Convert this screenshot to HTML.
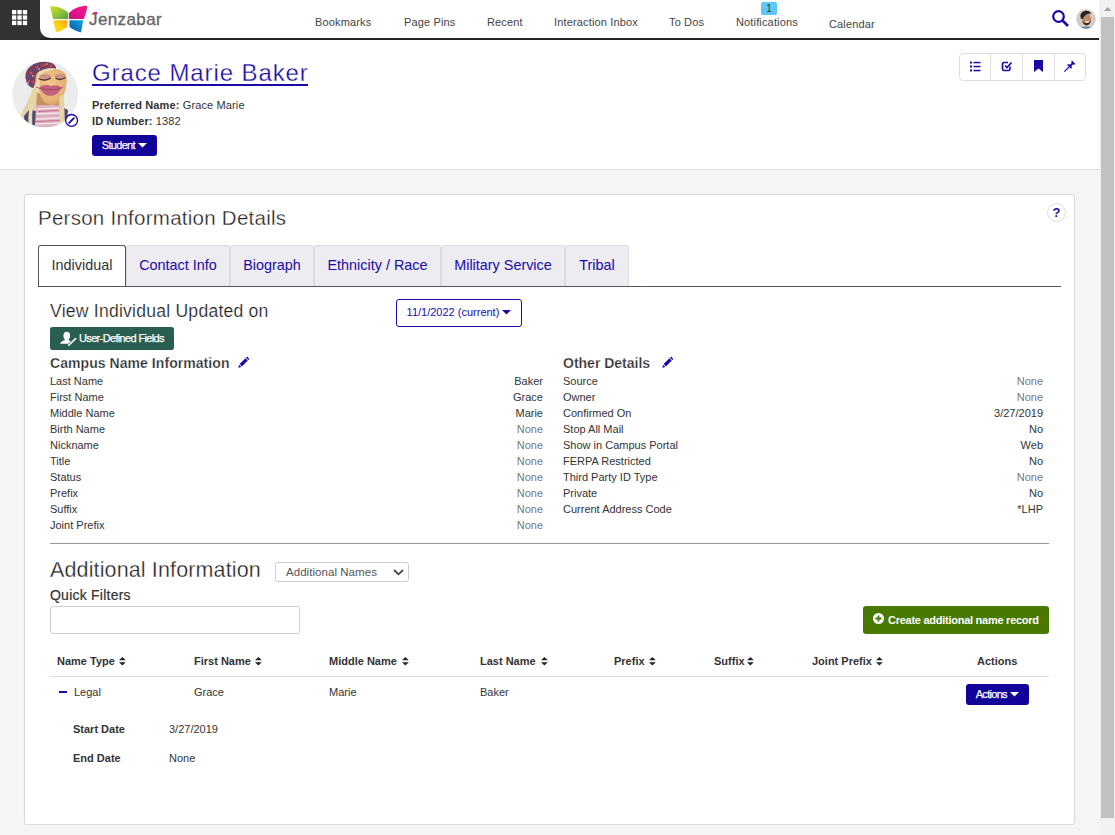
<!DOCTYPE html>
<html lang="en">
<head>
<meta charset="utf-8">
<title>Person Information Details</title>
<style>
*{box-sizing:border-box;margin:0;padding:0}
html,body{width:1115px;height:835px;overflow:hidden}
body{position:relative;background:#f5f5f5;font-family:"Liberation Sans",Arial,sans-serif;font-size:11px;color:#333;line-height:1}
.a{position:absolute;white-space:nowrap}
a{color:#1a0dab}
/* top bar */
#top{left:0;top:0;width:1099px;height:40px;background:#333}
#topl{left:40px;top:38px;width:1059px;height:2px;background:#222}
#topw{left:40px;top:0;width:1059px;height:38px;background:#fff;border-bottom-left-radius:10px}
.nav{top:17px;font-size:11px;letter-spacing:0.150px;color:#444}
/* scrollbar */
#sb{left:1099px;top:0;width:16px;height:835px;background:#f1f1f1}
#sbt{left:1101px;top:17px;width:13px;height:801px;background:#c1c1c1}
/* page header */
#ph{left:0;top:40px;width:1099px;height:130px;background:#fff;border-bottom:1px solid #ddd}
#name{left:92px;top:61px;font-size:24px;letter-spacing:0.900px;color:#1608a2;-webkit-text-stroke:0.320px #fff}
#nameu{left:92px;top:84px;width:216px;height:2px;background:#1b0ba6}
.btnb{background:#12029a;color:#fff;border-radius:3px;text-align:center;-webkit-text-stroke:0.250px #fff}
/* card */
#card{left:24px;top:194px;width:1051px;height:631px;background:#fff;border:1px solid #dadada;border-radius:3px;box-shadow:0 0 1px rgba(0,0,0,.08)}
.tab{top:245px;height:41px;background:#ececf1;border:1px solid #dcdce0;border-bottom:none;border-radius:3px 3px 0 0;font-size:14.400px;color:#1b0ba6;line-height:39px;text-align:center}
.tab.act{background:#fff;color:#333;border-color:#555;z-index:2}
.l{font-size:11px;color:#333}
.r{font-size:11px;color:#333;text-align:right}
.n{color:#777}
.th{font-size:11px;font-weight:bold;color:#333;top:656px}
.td{font-size:11px;color:#333;top:687px}
</style>
</head>
<body>
<!-- top bar -->
<div class="a" id="top"></div>
<div class="a" id="topl"></div>
<div class="a" id="topw"></div>
<svg class="a" style="left:12px;top:10px" width="16" height="16" viewBox="0 0 16 16"><g fill="#fff"><rect x="0" y="0" width="4.300" height="4.300"/><rect x="5.400" y="0" width="4.300" height="4.300"/><rect x="10.800" y="0" width="4.300" height="4.300"/><rect x="0" y="5.400" width="4.300" height="4.300"/><rect x="5.400" y="5.400" width="4.300" height="4.300"/><rect x="10.800" y="5.400" width="4.300" height="4.300"/><rect x="0" y="10.800" width="4.300" height="4.300"/><rect x="5.400" y="10.800" width="4.300" height="4.300"/><rect x="10.800" y="10.800" width="4.300" height="4.300"/></g></svg>
<!-- logo -->
<svg class="a" style="left:49px;top:5px" width="40" height="30" viewBox="0 0 40 30">
<defs>
<linearGradient id="g1" x1="0" y1="0" x2="1" y2="1"><stop offset="0" stop-color="#d4de25"/><stop offset="0.55" stop-color="#8fc43c"/><stop offset="1" stop-color="#4f9f45"/></linearGradient>
<linearGradient id="g2" x1="1" y1="0" x2="0" y2="1"><stop offset="0" stop-color="#ec1c8e"/><stop offset="0.6" stop-color="#e2138a"/><stop offset="1" stop-color="#c01b7e"/></linearGradient>
<linearGradient id="g3" x1="0" y1="1" x2="1" y2="0"><stop offset="0" stop-color="#f5e50f"/><stop offset="0.5" stop-color="#fbcf12"/><stop offset="1" stop-color="#f39a1f"/></linearGradient>
<linearGradient id="g4" x1="1" y1="0" x2="0" y2="1"><stop offset="0" stop-color="#19a0e0"/><stop offset="0.5" stop-color="#0b7fc7"/><stop offset="1" stop-color="#174f9f"/></linearGradient>
</defs>
<path d="M1 1.200 C6 1 11 2.200 14 4 C16.500 5.500 18.500 7 19.300 8 L19.300 14 L4 14 C3 10 2 5 1 1.200 Z" fill="url(#g1)"/>
<path d="M20 8 C22 5.500 26 3 30 2 C33 1.200 36 0.800 38.200 0.800 C38 5 36.500 10 34.800 14 L20 14 Z" fill="url(#g2)"/>
<path d="M4.500 15.200 L18.700 15.200 L18.200 22 C15 24.500 11 26.500 7.400 27.500 C6 23 5 19 4.500 15.200 Z" fill="url(#g3)"/>
<path d="M20.400 15.200 L34.200 15.200 C33.500 19.500 32.800 23.500 32 27.600 C28 26.500 23.500 24.500 20.600 22 Z" fill="url(#g4)"/>
</svg>
<div class="a" style="left:89px;top:11px;font-size:17px;color:#666;letter-spacing:0.4px;-webkit-text-stroke:0.350px #666">Jenzabar</div>
<div class="a" style="left:94px;top:12px;width:3px;height:2px;background:#e6168b"></div>
<div class="a nav" style="left:315px">Bookmarks</div>
<div class="a nav" style="left:404px">Page Pins</div>
<div class="a nav" style="left:487px">Recent</div>
<div class="a nav" style="left:554px">Interaction Inbox</div>
<div class="a nav" style="left:669px">To Dos</div>
<div class="a nav" style="left:736px">Notifications</div>
<div class="a nav" style="left:829px;top:19px">Calendar</div>
<div class="a" style="left:761px;top:2px;width:16px;height:13px;background:#5bc8f9;border-radius:2px;font-size:10px;line-height:13px;text-align:center;color:#333">1</div>
<svg class="a" style="left:1051px;top:9px" width="19" height="19" viewBox="0 0 19 19"><circle cx="7.500" cy="7.500" r="5.300" fill="none" stroke="#1b0ba6" stroke-width="2.200"/><path d="M11.500 11.500 L17 17" stroke="#1b0ba6" stroke-width="2.600"/></svg>
<svg class="a" style="left:1076px;top:9px" width="20" height="20" viewBox="0 0 20 20"><defs><clipPath id="uc"><circle cx="10" cy="10" r="9.800"/></clipPath><filter id="ub"><feGaussianBlur stdDeviation="0.45"/></filter></defs><g clip-path="url(#uc)"><rect width="20" height="20" fill="#cfcdc9"/><g filter="url(#ub)"><ellipse cx="10.500" cy="10.500" rx="4.600" ry="6" fill="#c08a63"/><path d="M4.500 8 C3.500 1 14 -0.500 15 5 C12.500 4 8.500 5 7 9.500 L5 10Z" fill="#2b2320"/><path d="M6.500 11.500 C7 18 14 18 15 11 C14 14.500 8 15.500 6.500 11.500Z" fill="#3b2a22"/><ellipse cx="11.200" cy="12.800" rx="1.900" ry="0.900" fill="#f3eee8"/><path d="M3 20 C5 16.500 16 16.500 18 20Z" fill="#5d80ad"/></g></g></svg>
<!-- scrollbar -->
<div class="a" id="sb"></div>
<div class="a" id="sbt"></div>
<svg class="a" style="left:1104px;top:7px" width="8" height="4" viewBox="0 0 8 4"><path d="M0 4 L3.750 0 L7.500 4Z" fill="#a3a3a3"/></svg>

<!-- page header -->
<div class="a" id="ph"></div>
<svg class="a" style="left:12px;top:61px" width="67" height="67" viewBox="0 0 67 67"><defs><clipPath id="ac"><circle cx="33.200" cy="33.200" r="33"/></clipPath><filter id="bl" x="-10%" y="-10%" width="120%" height="120%"><feGaussianBlur stdDeviation="0.55"/></filter>
<radialGradient id="fg" cx="0.45" cy="0.4" r="0.75"><stop offset="0" stop-color="#f0c78d"/><stop offset="0.65" stop-color="#e6b277"/><stop offset="1" stop-color="#c98f5c"/></radialGradient></defs>
<g clip-path="url(#ac)"><rect width="67" height="67" fill="#ececec"/><g filter="url(#bl)">
<path d="M14 19 C11 8 22 0.500 33 0.800 C40 1 45 4 44 9 C38 10 30 16 27 28 C20 28 15 25 14 19Z" fill="#74405e"/>
<g fill="#c5484f"><circle cx="19" cy="12" r="1.500"/><circle cx="25" cy="6" r="1.600"/><circle cx="33" cy="4" r="1.500"/><circle cx="21" cy="21" r="1.500"/><circle cx="28" cy="12" r="1.400"/><circle cx="39" cy="5" r="1.400"/><circle cx="17" cy="20" r="1.200"/><circle cx="30" cy="4.500" r="1.100"/></g>
<g fill="#4a4c9c"><circle cx="17" cy="16" r="1.400"/><circle cx="23" cy="10" r="1.300"/><circle cx="30" cy="8" r="1.300"/><circle cx="24" cy="17" r="1.400"/><circle cx="36" cy="8" r="1.200"/><circle cx="19" cy="24" r="1.200"/><circle cx="22" cy="4" r="1.100"/></g>
<g fill="#e8dfe6"><circle cx="21" cy="15" r="0.800"/><circle cx="27" cy="8" r="0.800"/><circle cx="35" cy="3" r="0.700"/><circle cx="16" cy="22" r="0.700"/></g>
<path d="M27 12 C23 22 19 34 14 44 C10 51 7 57 5 67 L25 67 C25 55 26 40 27 30Z" fill="#e6d4a4"/>
<path d="M17 49 L12 55 L13 67 L24 67 L24 50 Z" fill="#4e4a72"/>
<path d="M18 44 C16 52 16 60 17 67 L20.500 67 C20 60 20 52 21 44Z" fill="#eadbb0"/>
<path d="M25 30 L48 34 L48 48 L24 48Z" fill="#c48f62"/><path d="M24 44 L47 44 L49 67 L23 67Z" fill="#ddb0bd"/>
<path d="M25 48 L47 47 M24 53 L48 52 M24 58 L48.500 57 M23 63 L49 62" stroke="#efe6e8" stroke-width="1.700"/>
<path d="M26 50.500 L47 49.500 M24 60.500 L49 59.500" stroke="#c7708f" stroke-width="1.100"/>
<path d="M50 46 L56 49 L55 59 L51 61Z" fill="#4e4a72"/>
<path d="M24 14 C27 6 48 5 53.500 13 C56 19 54 27 52 33 C50 39 46 44 40 44 C33 44 30 38 27.500 33 C25 28 22 22 24 14Z" fill="url(#fg)"/>
<path d="M26 13 C30 7 40 6 46 8.500 C40 8.500 32 10 28 15Z" fill="#eadbb0"/>
<path d="M47 36 L52 33 L53 66 L48 67Z" fill="#e6d4a4"/>
<path d="M23 29 C25 21 24 15 28 10 L30 12 C27 17 28 24 27 33Z" fill="#eadbb0"/>
<ellipse cx="33" cy="15.500" rx="6" ry="2.300" fill="#cf8f8b"/><ellipse cx="48" cy="15" rx="5" ry="2.200" fill="#cf8f8b"/>
<path d="M26.500 17.500 C30 19.500 35.500 19.500 39 17" fill="none" stroke="#55332f" stroke-width="1.400"/><path d="M43.500 17 C46.500 19 50.500 18.500 53.500 16.500" fill="none" stroke="#55332f" stroke-width="1.400"/>
<path d="M27.500 26.500 C31 23.500 35.500 23.500 38.500 25 C42 23.500 46.500 24 49.500 26.500 C47 32.500 43 34.800 38.500 34.800 C33.500 34.800 30 32 27.500 26.500Z" fill="#c2617e"/>
<path d="M24 26 C30 29.300 45 29.800 51 26.300" fill="none" stroke="#9b4662" stroke-width="0.900"/>
</g></g></svg>
<svg class="a" style="left:64px;top:113px" width="15" height="15" viewBox="0 0 15 15"><circle cx="7.600" cy="7.400" r="5.900" fill="#fff" stroke="#1b0ba6" stroke-width="1.300"/><path d="M5.200 9.800 L9.800 5.200" stroke="#1b0ba6" stroke-width="1.900" stroke-linecap="round"/></svg>
<a class="a" id="name">Grace Marie Baker</a>
<div class="a" id="nameu"></div>
<div class="a" style="left:92px;top:100px;font-size:11px;letter-spacing:0.130px;color:#333"><b>Preferred Name:</b> Grace Marie</div>
<div class="a" style="left:92px;top:116px;font-size:11px;letter-spacing:0.130px;color:#333"><b>ID Number:</b> 1382</div>
<div class="a btnb" style="left:92px;top:135px;width:65px;height:21px;font-size:11px;line-height:21px;letter-spacing:-0.700px">Student <svg width="9" height="5" viewBox="0 0 9 5" style="vertical-align:1px;margin-left:1px"><path d="M0 0H9L4.500 4.500Z" fill="#fff"/></svg></div>
<!-- action group -->
<div class="a" style="left:959px;top:53px;width:127px;height:28px;background:#fff;border:1px solid #ddd;border-radius:4px"></div>
<div class="a" style="left:990px;top:53px;width:1px;height:28px;background:#ddd"></div>
<div class="a" style="left:1022px;top:53px;width:1px;height:28px;background:#ddd"></div>
<div class="a" style="left:1054px;top:53px;width:1px;height:28px;background:#ddd"></div>
<svg class="a" style="left:970px;top:60.500px" width="11" height="11" viewBox="0 0 11 11"><g fill="#1b0ba6"><rect x="0" y="0.500" width="2" height="2"/><rect x="3.500" y="0.800" width="7" height="1.500"/><rect x="0" y="4.500" width="2" height="2"/><rect x="3.500" y="4.800" width="7" height="1.500"/><rect x="0" y="8.500" width="2" height="2"/><rect x="3.500" y="8.800" width="7" height="1.500"/></g></svg>
<svg class="a" style="left:1001px;top:60px" width="12" height="12" viewBox="0 0 12 12"><path d="M9 6.500 V9 a1.500 1.500 0 0 1 -1.500 1.500 H3 A1.500 1.500 0 0 1 1.500 9 V4 A1.500 1.500 0 0 1 3 2.500 H7" fill="none" stroke="#1b0ba6" stroke-width="1.600"/><path d="M4 5.500 L6 7.500 L10.500 2.500" fill="none" stroke="#1b0ba6" stroke-width="1.700"/></svg>
<svg class="a" style="left:1034px;top:60px" width="9" height="12" viewBox="0 0 9 12"><path d="M0 0 H9 V12 L4.500 8.500 L0 12Z" fill="#1b0ba6"/></svg>
<svg class="a" style="left:1064px;top:60px" width="12" height="12" viewBox="0 0 12 12"><path d="M7.800 0.300 L11.700 4.200 L10.600 4.600 L9 4.400 L7.600 5.800 L7.800 8.300 L6.900 8.800 L3.200 5.100 L3.700 4.200 L6.200 4.400 L7.600 3 L7.400 1.400Z" fill="#1b0ba6"/><path d="M5 7 L0.400 11.600" stroke="#1b0ba6" stroke-width="1.100"/></svg>

<!-- card -->
<div class="a" id="card"></div>
<div class="a" style="left:38px;top:208px;font-size:20.500px;letter-spacing:0.260px;color:#222;-webkit-text-stroke:0.300px #fff">Person Information Details</div>
<div class="a" style="left:1047px;top:203px;width:19px;height:19px;border:1px solid #ddd;border-radius:50%;background:#fff;font-size:13px;font-weight:bold;color:#1b0ba6;text-align:center;line-height:18px">?</div>
<!-- tabs -->
<div class="a" style="left:38px;top:286px;width:1023px;height:1px;background:#50565c;z-index:3"></div>
<div class="a tab act" style="left:38px;width:88px;height:41px">Individual</div>
<div class="a tab" style="left:126px;width:104px">Contact Info</div>
<div class="a tab" style="left:230px;width:84px">Biograph</div>
<div class="a tab" style="left:314px;width:127px">Ethnicity / Race</div>
<div class="a tab" style="left:441px;width:124px">Military Service</div>
<div class="a tab" style="left:565px;width:64px">Tribal</div>

<div class="a" style="left:50px;top:303px;font-size:17.600px;letter-spacing:0.220px;color:#222;-webkit-text-stroke:0.200px #fff">View Individual Updated on</div>
<div class="a" style="left:396px;top:299px;width:126px;height:28px;border:1px solid #1b0ba6;border-radius:3px;background:#fff;font-size:11px;color:#1b0ba6;text-align:center;line-height:25px">11/1/2022 (current) <svg width="9" height="5" viewBox="0 0 9 5" style="vertical-align:1px;margin-left:0"><path d="M0 0H9L4.500 4.500Z" fill="#1b0ba6"/></svg></div>
<div class="a" style="left:50px;top:327px;width:124px;height:23px;background:#295f50;border-radius:2.500px;color:#fff;font-size:11px;line-height:23px;padding-left:29px;letter-spacing:-0.650px;-webkit-text-stroke:0.250px #fff">User-Defined Fields</div>
<svg class="a" style="left:60px;top:331px" width="17" height="16" viewBox="0 0 17 16"><ellipse cx="6.700" cy="4.700" rx="3.300" ry="3.900" fill="#fff"/><path d="M0.300 12.800 C0.300 10.600 3 10 4.900 9 L4.900 7.500 L8.600 7.500 L8.600 9 C9.600 9.500 10.200 9.800 10.800 10.300 L8.200 12.800Z" fill="#fff"/><path d="M9 14 L15.600 7.700" stroke="#fff" stroke-width="1.700" stroke-linecap="round"/><path d="M8 15 L8.600 13.300 L9.800 14.400Z" fill="#fff"/></svg>

<div class="a" style="left:50px;top:356px;font-size:14px;letter-spacing:0.060px;font-weight:bold;color:#2b2b2b;-webkit-text-stroke:0.250px #fff">Campus Name Information</div>
<svg class="a" style="left:238px;top:356.300px" width="12" height="12" viewBox="0 0 12 12"><path d="M9.100 0.600 L11.400 2.900 L10.300 4 L8 1.700Z M7.500 2.200 L9.800 4.500 L3.900 10.400 L1.600 8.100Z M1.100 8.700 L3.300 10.900 L0.200 11.800Z" fill="#1b0ba6"/></svg>
<div class="a" style="left:563px;top:356px;font-size:14px;font-weight:bold;color:#2b2b2b;-webkit-text-stroke:0.250px #fff">Other Details</div>
<svg class="a" style="left:662px;top:356.300px" width="12" height="12" viewBox="0 0 12 12"><path d="M9.100 0.600 L11.400 2.900 L10.300 4 L8 1.700Z M7.500 2.200 L9.800 4.500 L3.900 10.400 L1.600 8.100Z M1.100 8.700 L3.300 10.900 L0.200 11.800Z" fill="#1b0ba6"/></svg>

<div class="a l" style="left:50px;top:376px">Last Name</div><div class="a r" style="left:343px;width:200px;top:376px">Baker</div>
<div class="a l" style="left:50px;top:392px">First Name</div><div class="a r" style="left:343px;width:200px;top:392px">Grace</div>
<div class="a l" style="left:50px;top:408px">Middle Name</div><div class="a r" style="left:343px;width:200px;top:408px">Marie</div>
<div class="a l" style="left:50px;top:424px">Birth Name</div><div class="a r n" style="left:343px;width:200px;top:424px">None</div>
<div class="a l" style="left:50px;top:440px">Nickname</div><div class="a r n" style="left:343px;width:200px;top:440px">None</div>
<div class="a l" style="left:50px;top:456px">Title</div><div class="a r n" style="left:343px;width:200px;top:456px">None</div>
<div class="a l" style="left:50px;top:472px">Status</div><div class="a r n" style="left:343px;width:200px;top:472px">None</div>
<div class="a l" style="left:50px;top:488px">Prefix</div><div class="a r n" style="left:343px;width:200px;top:488px">None</div>
<div class="a l" style="left:50px;top:504px">Suffix</div><div class="a r n" style="left:343px;width:200px;top:504px">None</div>
<div class="a l" style="left:50px;top:520px">Joint Prefix</div><div class="a r n" style="left:343px;width:200px;top:520px">None</div>

<div class="a l" style="left:563px;top:376px">Source</div><div class="a r n" style="left:843px;width:200px;top:376px">None</div>
<div class="a l" style="left:563px;top:392px">Owner</div><div class="a r n" style="left:843px;width:200px;top:392px">None</div>
<div class="a l" style="left:563px;top:408px">Confirmed On</div><div class="a r" style="left:843px;width:200px;top:408px">3/27/2019</div>
<div class="a l" style="left:563px;top:424px">Stop All Mail</div><div class="a r" style="left:843px;width:200px;top:424px">No</div>
<div class="a l" style="left:563px;top:440px">Show in Campus Portal</div><div class="a r" style="left:843px;width:200px;top:440px">Web</div>
<div class="a l" style="left:563px;top:456px">FERPA Restricted</div><div class="a r" style="left:843px;width:200px;top:456px">No</div>
<div class="a l" style="left:563px;top:472px">Third Party ID Type</div><div class="a r n" style="left:843px;width:200px;top:472px">None</div>
<div class="a l" style="left:563px;top:488px">Private</div><div class="a r" style="left:843px;width:200px;top:488px">No</div>
<div class="a l" style="left:563px;top:504px">Current Address Code</div><div class="a r" style="left:843px;width:200px;top:504px">*LHP</div>

<div class="a" style="left:50px;top:543px;width:999px;height:1px;background:#999"></div>

<div class="a" style="left:50px;top:560px;font-size:21.500px;letter-spacing:0.130px;color:#222;-webkit-text-stroke:0.300px #fff">Additional Information</div>
<div class="a" style="left:275px;top:562px;width:134px;height:20px;border:1px solid #cdcdcd;border-radius:3px;background:#fff;font-size:11.500px;letter-spacing:0.050px;color:#555;line-height:18px;padding-left:10px">Additional Names</div>
<svg class="a" style="left:393px;top:568.500px" width="11" height="7" viewBox="0 0 11 7"><path d="M1 1 L5.500 5.300 L10 1" fill="none" stroke="#444" stroke-width="1.800"/></svg>
<div class="a" style="left:50px;top:588px;font-size:14px;letter-spacing:0.230px;color:#333;-webkit-text-stroke:0.200px #333">Quick Filters</div>
<div class="a" style="left:50px;top:606px;width:250px;height:28px;border:1px solid #ccc;border-radius:3px;background:#fff"></div>
<div class="a" style="left:863px;top:606px;width:186px;height:28px;background:#4a7902;border-radius:3px;color:#fff;font-size:11px;font-weight:bold;line-height:28px;padding-left:25px;letter-spacing:-0.260px">Create additional name record</div>
<svg class="a" style="left:873px;top:613px" width="11" height="11" viewBox="0 0 11 11"><circle cx="5.500" cy="5.500" r="5.500" fill="#fff"/><path d="M5.500 2.500 V8.500 M2.500 5.500 H8.500" stroke="#4b7a08" stroke-width="1.800"/></svg>

<div class="a th" style="left:57px">Name Type</div>
<div class="a th" style="left:194px">First Name</div>
<div class="a th" style="left:329px">Middle Name</div>
<div class="a th" style="left:480px">Last Name</div>
<div class="a th" style="left:614px">Prefix</div>
<div class="a th" style="left:714px">Suffix</div>
<div class="a th" style="left:812px">Joint Prefix</div>
<div class="a th" style="left:977px">Actions</div>
<svg class="a" style="left:119.200px;top:656.700px" width="7" height="9" viewBox="0 0 7 9"><path d="M0 3.200 L3.400 0 L6.800 3.200Z M0 5.300 L3.400 8.500 L6.800 5.300Z" fill="#222"/></svg>
<svg class="a" style="left:255px;top:656.700px" width="7" height="9" viewBox="0 0 7 9"><path d="M0 3.200 L3.400 0 L6.800 3.200Z M0 5.300 L3.400 8.500 L6.800 5.300Z" fill="#222"/></svg>
<svg class="a" style="left:402px;top:656.700px" width="7" height="9" viewBox="0 0 7 9"><path d="M0 3.200 L3.400 0 L6.800 3.200Z M0 5.300 L3.400 8.500 L6.800 5.300Z" fill="#222"/></svg>
<svg class="a" style="left:540.700px;top:656.700px" width="7" height="9" viewBox="0 0 7 9"><path d="M0 3.200 L3.400 0 L6.800 3.200Z M0 5.300 L3.400 8.500 L6.800 5.300Z" fill="#222"/></svg>
<svg class="a" style="left:648.500px;top:656.700px" width="7" height="9" viewBox="0 0 7 9"><path d="M0 3.200 L3.400 0 L6.800 3.200Z M0 5.300 L3.400 8.500 L6.800 5.300Z" fill="#222"/></svg>
<svg class="a" style="left:747.300px;top:656.700px" width="7" height="9" viewBox="0 0 7 9"><path d="M0 3.200 L3.400 0 L6.800 3.200Z M0 5.300 L3.400 8.500 L6.800 5.300Z" fill="#222"/></svg>
<svg class="a" style="left:876.300px;top:656.700px" width="7" height="9" viewBox="0 0 7 9"><path d="M0 3.200 L3.400 0 L6.800 3.200Z M0 5.300 L3.400 8.500 L6.800 5.300Z" fill="#222"/></svg>
<div class="a" style="left:50px;top:676px;width:999px;height:1px;background:#ddd"></div>

<div class="a" style="left:58.500px;top:691px;width:8px;height:2px;background:#1b0ba6"></div>
<div class="a td" style="left:74px">Legal</div>
<div class="a td" style="left:194px">Grace</div>
<div class="a td" style="left:329px">Marie</div>
<div class="a td" style="left:480px">Baker</div>
<div class="a btnb" style="left:966px;top:684px;width:63px;height:21px;font-size:11px;line-height:21px;letter-spacing:-0.700px">Actions <svg width="9" height="5" viewBox="0 0 9 5" style="vertical-align:1px;margin-left:1px"><path d="M0 0H9L4.500 4.500Z" fill="#fff"/></svg></div>

<div class="a" style="left:73px;top:724px;font-size:11px;font-weight:bold;color:#333">Start Date</div>
<div class="a" style="left:169px;top:724px;font-size:11px;color:#333">3/27/2019</div>
<div class="a" style="left:73px;top:753px;font-size:11px;font-weight:bold;color:#333">End Date</div>
<div class="a" style="left:169px;top:753px;font-size:11px;color:#333">None</div>
</body>
</html>
